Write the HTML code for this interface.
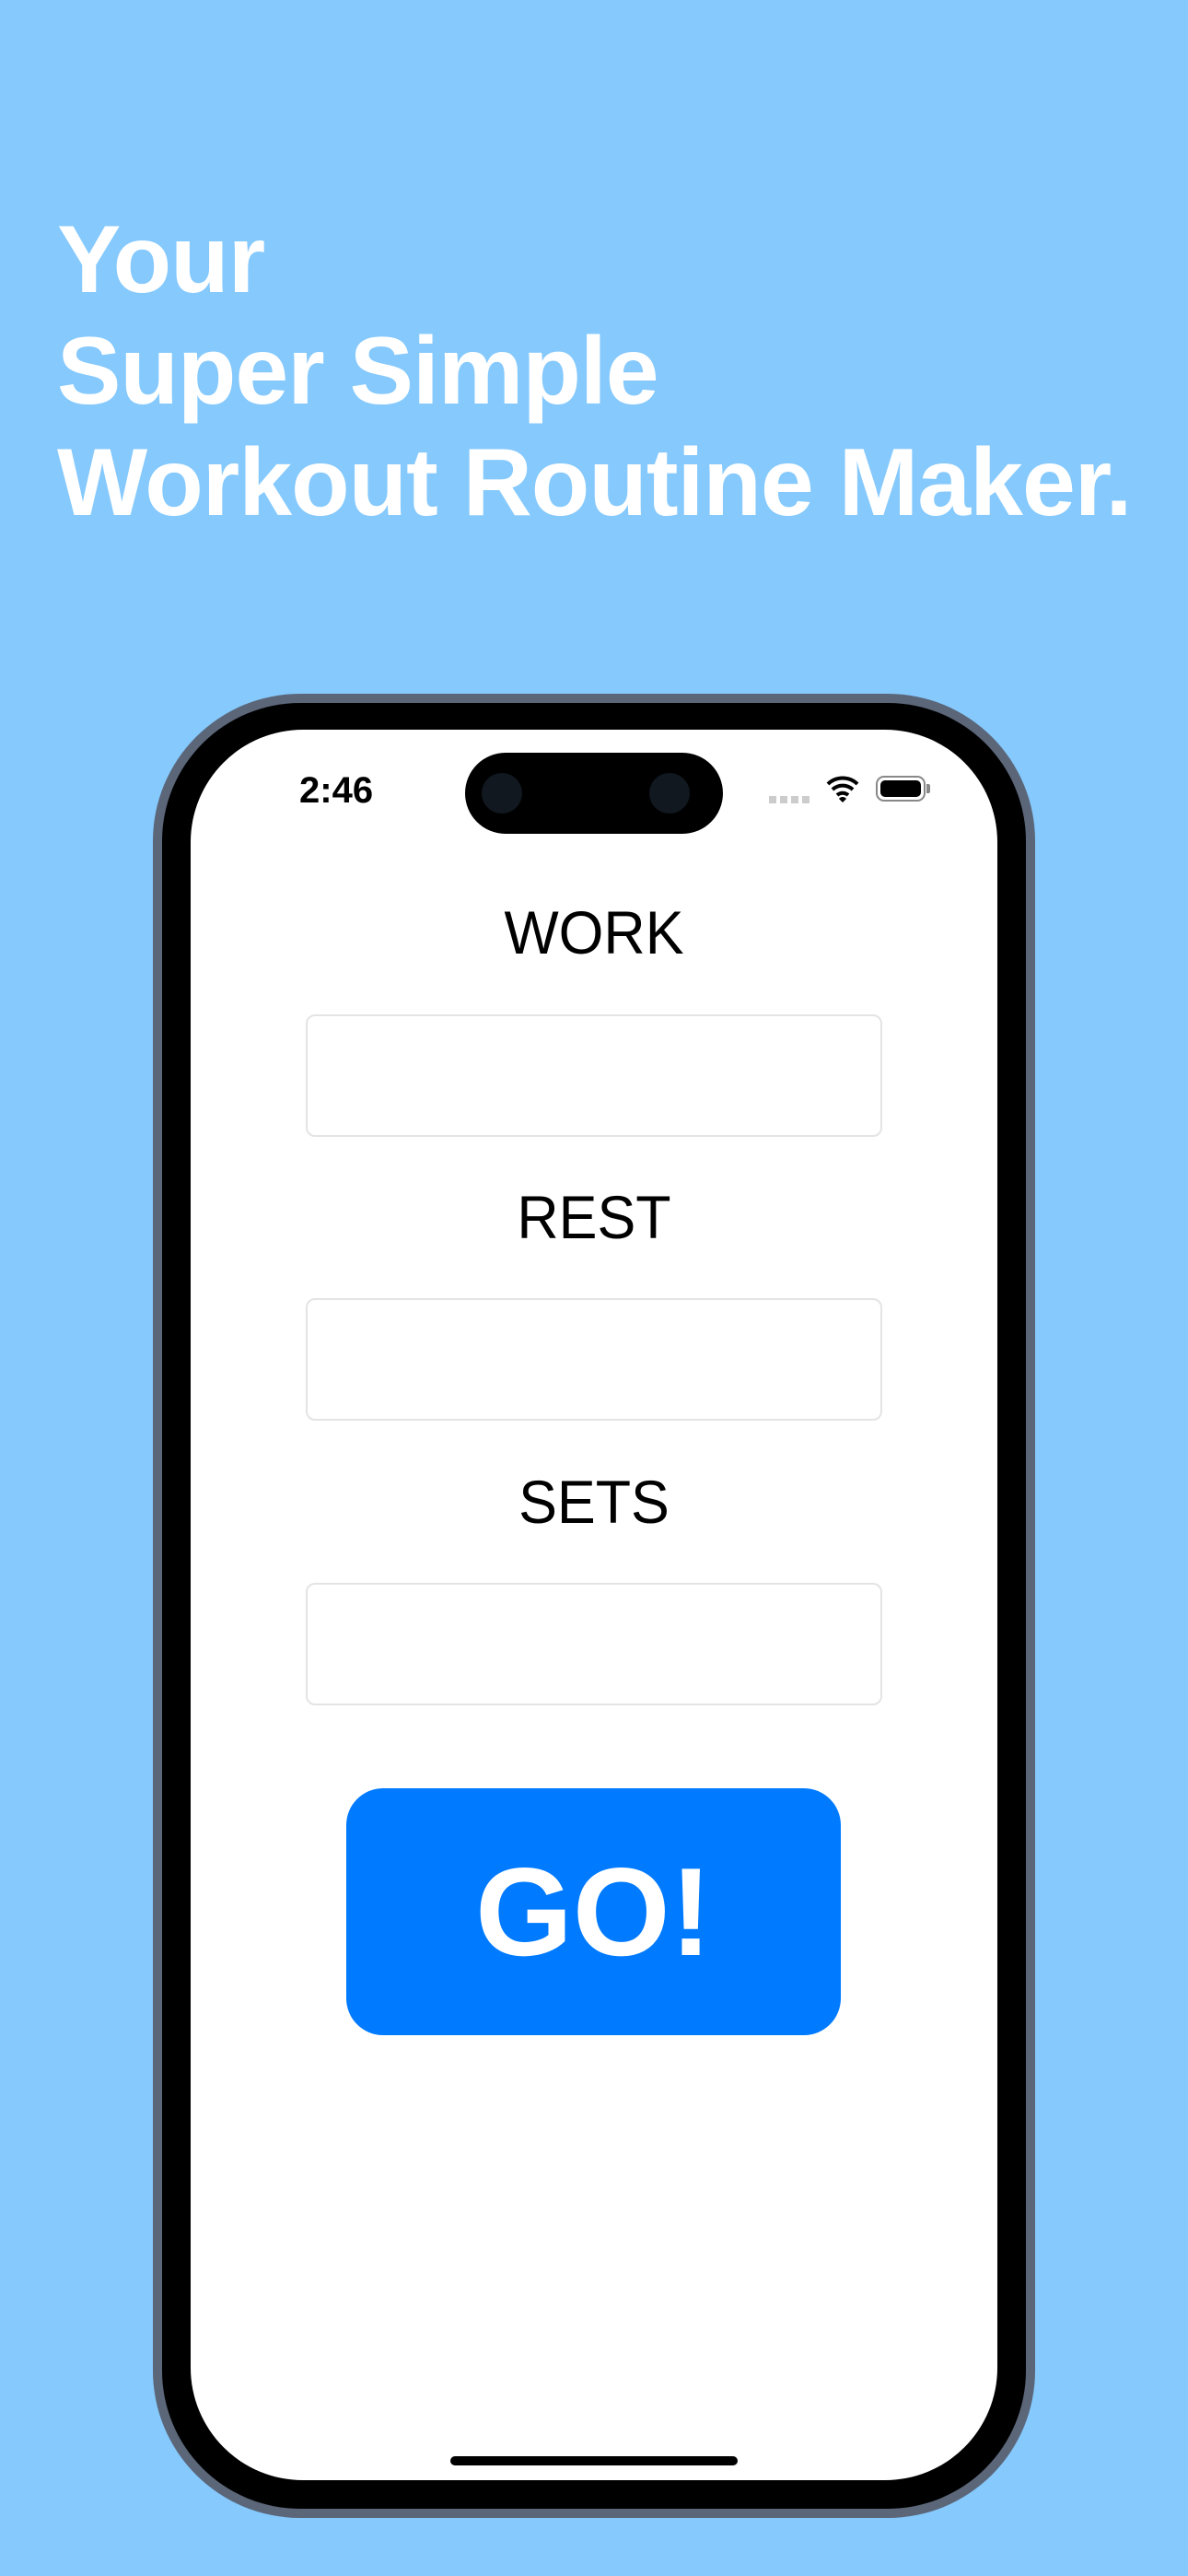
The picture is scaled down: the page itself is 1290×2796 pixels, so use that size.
<!DOCTYPE html>
<html><head><meta charset="utf-8"><style>
*{margin:0;padding:0;box-sizing:border-box}
body{width:1290px;height:2796px;background:#85c9fd;position:relative;overflow:hidden;font-family:"Liberation Sans",sans-serif}
.title{position:absolute;left:62px;top:222px;color:#fff;font-weight:bold;font-size:104px;line-height:121px;letter-spacing:-1px}
.frame{position:absolute;left:166px;top:753px;width:958px;height:1980px;border-radius:160px;background:#5b6679;}
.bezel{position:absolute;left:176px;top:763px;width:938px;height:1960px;border-radius:150px;background:#000;}
.screen{position:absolute;left:207px;top:792px;width:876px;height:1900px;border-radius:122px;background:#fff;overflow:hidden}
.island{position:absolute;left:298px;top:25px;width:280px;height:88px;border-radius:44px;background:#000}
.cam{position:absolute;top:22px;width:44px;height:44px;border-radius:50%;background:#111820}
.time{position:absolute;left:118px;top:44px;font-size:40px;font-weight:bold;color:#000}
.label{position:absolute;left:0;width:876px;text-align:center;font-size:66px;color:#000;transform:scaleX(0.95)}
.inp{position:absolute;left:125px;width:626px;height:133px;border:2px solid #e4e4e4;border-radius:10px}
.btn{position:absolute;left:169px;top:1149px;width:537px;height:268px;border-radius:40px;background:#007aff;color:#fff;font-size:136px;font-weight:bold;text-align:center;line-height:268px}
.home{position:absolute;left:282px;top:1874px;width:312px;height:10px;border-radius:5px;background:#000}
</style></head><body>
<div class="title">Your<br>Super Simple<br>Workout Routine Maker.</div>
<div class="frame"></div><div class="bezel"></div>
<div class="screen">
 <div class="time">2:46</div>
 <div class="island"><div class="cam" style="left:18px"></div><div class="cam" style="left:200px"></div></div>
 <div style="position:absolute;left:628px;top:72px;width:44px;height:8px;background:repeating-linear-gradient(90deg,#ccc 0 8px,transparent 8px 12px)"></div>
 <svg style="position:absolute;left:690px;top:48px" width="36" height="32" viewBox="0 0 36 32"><path d="M2 11a23 23 0 0 1 32 0M7 17a16 16 0 0 1 22 0M12 23a9 9 0 0 1 12 0" stroke="#000" stroke-width="4" fill="none"/><path d="M14 27l4 4 4-4a5 5 0 0 0-8 0z" fill="#000"/></svg>
 <div style="position:absolute;left:744px;top:50px;width:54px;height:28px;border:2px solid #888;border-radius:9px;padding:3px"><div style="width:100%;height:100%;background:#000;border-radius:5px"></div></div>
 <div style="position:absolute;left:799px;top:59px;width:4px;height:10px;background:#888;border-radius:0 2px 2px 0"></div>
 <div class="label" style="top:182px">WORK</div>
 <div class="inp" style="top:309px"></div>
 <div class="label" style="top:491px">REST</div>
 <div class="inp" style="top:617px"></div>
 <div class="label" style="top:800px">SETS</div>
 <div class="inp" style="top:926px"></div>
 <div class="btn">GO!</div>
 <div class="home"></div>
</div>
</body></html>
